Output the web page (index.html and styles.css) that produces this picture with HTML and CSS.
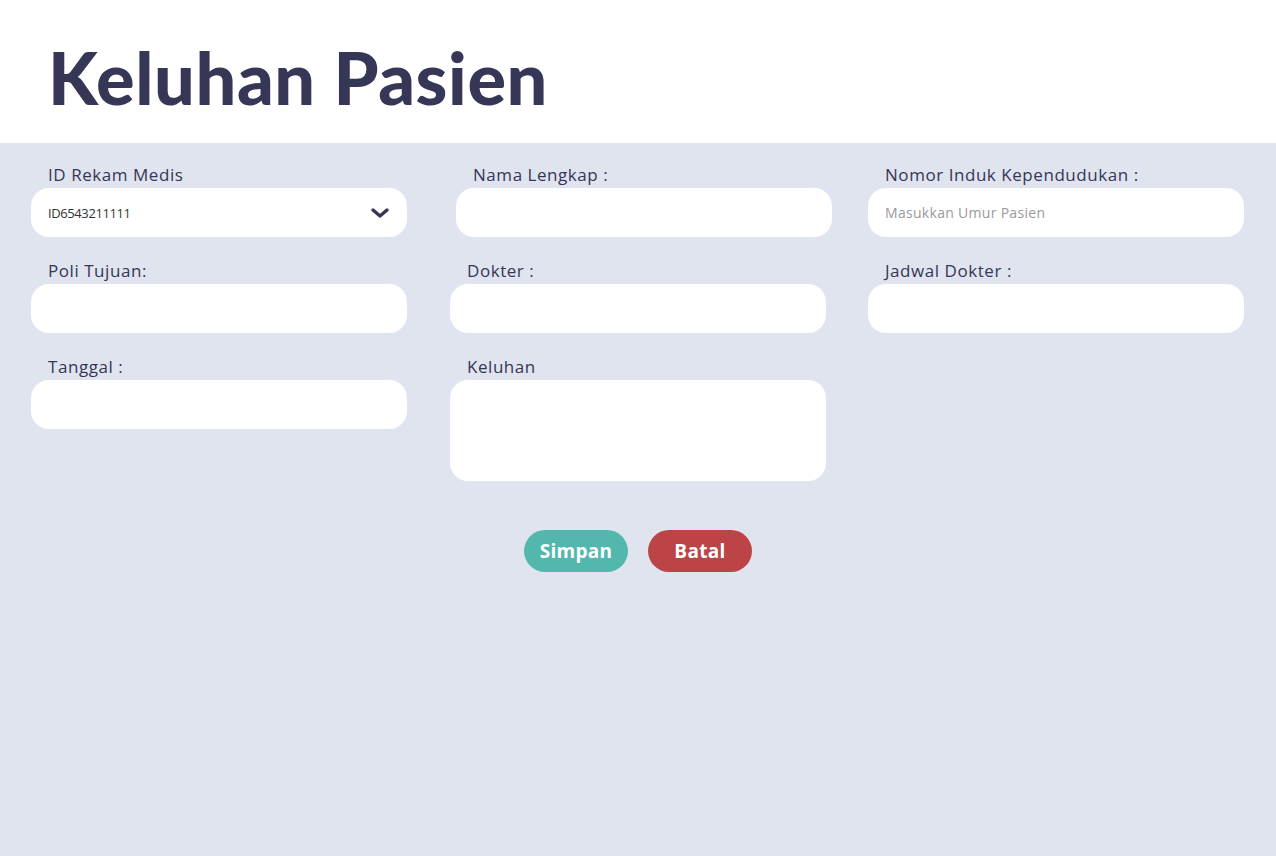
FILE: index.html
```html
<!DOCTYPE html>
<html lang="id">
<head>
<meta charset="utf-8">
<title>Keluhan Pasien</title>
<link rel="stylesheet" href="styles.css">
</head>
<body>
<header class="header">
  <h1 class="title">Keluhan Pasien</h1>
</header>
<main class="content">
  <form class="form">
    <div class="field">
      <label class="label">ID Rekam Medis</label>
      <div class="box select">
        <span class="value">ID6543211111</span>
        <svg class="chev" width="20" height="12" viewBox="0 0 20 12"><path d="M3 3 L10 9 L17 3" fill="none" stroke="#363657" stroke-width="3.4" stroke-linecap="round" stroke-linejoin="round"/></svg>
      </div>
    </div>
    <div class="field shift">
      <label class="label">Nama Lengkap :</label>
      <div class="box"></div>
    </div>
    <div class="field">
      <label class="label">Nomor Induk Kependudukan :</label>
      <div class="box"><span class="placeholder">Masukkan Umur Pasien</span></div>
    </div>

    <div class="field">
      <label class="label">Poli Tujuan:</label>
      <div class="box"></div>
    </div>
    <div class="field">
      <label class="label">Dokter :</label>
      <div class="box"></div>
    </div>
    <div class="field">
      <label class="label">Jadwal Dokter :</label>
      <div class="box"></div>
    </div>

    <div class="field">
      <label class="label">Tanggal :</label>
      <div class="box"></div>
    </div>
    <div class="field">
      <label class="label">Keluhan</label>
      <div class="box area"></div>
    </div>
  </form>
  <div class="actions">
    <button class="btn save" type="button">Simpan</button>
    <button class="btn cancel" type="button">Batal</button>
  </div>
</main>
</body>
</html>
```
FILE: styles.css
```css
* { box-sizing: border-box; }
html, body { margin: 0; padding: 0; }
body {
  width: 1276px;
  height: 856px;
  background: #e0e4ef;
  font-family: "Open Sans", "Noto Sans", sans-serif;
  color: #363657;
}
.header {
  background: #ffffff;
  height: 143px;
  padding: 37px 0 0 48px;
}
.title {
  margin: 0;
  font-family: "Lato", "Open Sans", sans-serif;
  font-weight: 900;
  font-size: 72px;
  line-height: 80px;
  letter-spacing: 0.6px;
  color: #363657;
}
.content {
  padding: 21px 0 0 31px;
}
.form {
  display: grid;
  grid-template-columns: 419px 418px 376px;
  row-gap: 23px;
}
.field {
  display: flex;
  flex-direction: column;
  gap: 3px;
}
.shift { padding-left: 6px; }
.label {
  padding-left: 17px;
  font-size: 17px;
  line-height: 21px;
  font-weight: 500;
  letter-spacing: 0.55px;
}
.box {
  background: #ffffff;
  height: 49px;
  width: 376px;
  border-radius: 18px;
  display: flex;
  align-items: center;
  padding: 0 17px;
}
.area { height: 101px; }
.value {
  font-size: 13px;
  letter-spacing: -0.4px;
  color: #333333;
  flex: 1;
}
.placeholder {
  font-size: 14px;
  letter-spacing: 0.3px;
  color: #9a9a9a;
}
.actions {
  display: flex;
  justify-content: center;
  gap: 20px;
  margin-top: 49px;
  padding-right: 31px;
}
.btn {
  width: 104px;
  height: 42px;
  border: none;
  border-radius: 21px;
  color: #ffffff;
  font-family: "Open Sans", sans-serif;
  font-weight: 700;
  font-size: 19px;
  letter-spacing: 0.3px;
  padding: 0;
}
.save { background: #52b8ad; }
.cancel { background: #bc4446; }
```
